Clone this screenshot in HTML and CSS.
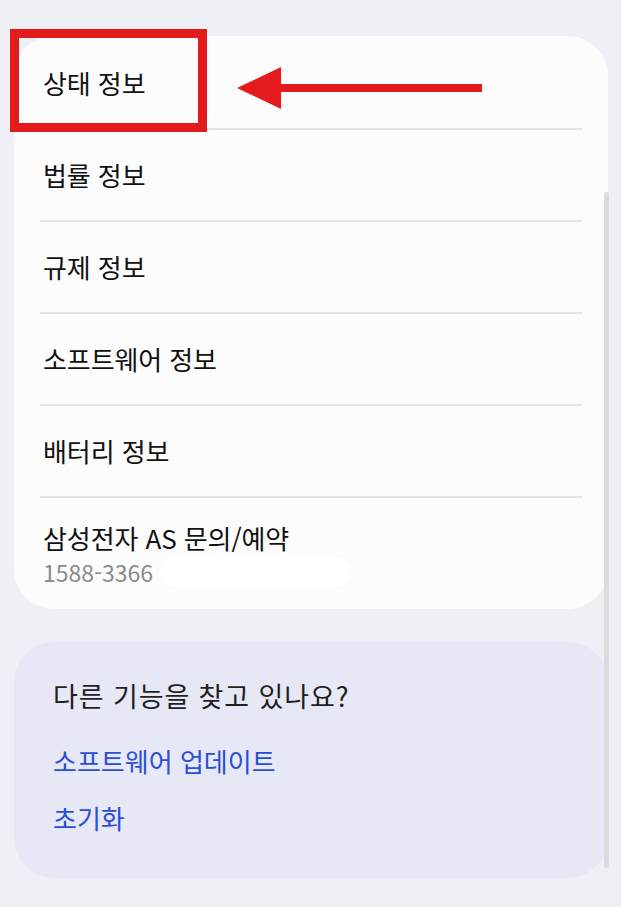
FILE: index.html
```html
<!DOCTYPE html>
<html lang="ko">
<head>
<meta charset="utf-8">
<link rel="stylesheet" href="styles.css">
</head>
<body>
<div class="page">
  <div class="card list">
    <div class="row first"><span class="title">상태 정보</span></div>
    <div class="row"><span class="title">법률 정보</span></div>
    <div class="row"><span class="title">규제 정보</span></div>
    <div class="row"><span class="title">소프트웨어 정보</span></div>
    <div class="row"><span class="title">배터리 정보</span></div>
    <div class="row last">
      <span class="title">삼성전자 AS 문의/예약</span>
      <span class="sub">1588-3366<span class="blur"></span></span>
    </div>
  </div>
  <div class="card help">
    <div class="help-title">다른 기능을 찾고 있나요?</div>
    <div class="link">소프트웨어 업데이트</div>
    <div class="link">초기화</div>
  </div>
  <div class="scrollbar"></div>
  <div class="highlight"></div>
  <svg class="arrow" width="250" height="46" viewBox="0 0 250 46">
    <polygon points="0,21 44,0 44,42" fill="#e31b1d"/>
    <rect x="43" y="17" width="202" height="8" fill="#e31b1d"/>
  </svg>
</div>
</body>
</html>
```
FILE: styles.css
```css
* { box-sizing: border-box; }
html, body { margin: 0; padding: 0; }
body {
  background: #eff0f6;
  font-family: "Noto Sans CJK KR", "Noto Sans", sans-serif;
  width: 621px;
  height: 907px;
  overflow: hidden;
}
.page {
  position: relative;
  width: 621px;
  height: 907px;
  padding: 36px 13px 0 14px;
}
.card {
  border-radius: 40px;
  width: 594px;
}
.list {
  background: #fcfcfd;
  padding: 0 26px;
}
.row {
  height: 92px;
  border-bottom: 2px solid #e4e4e6;
  display: flex;
  flex-direction: column;
  justify-content: center;
  padding-left: 3px;
}
.row.first { height: 94px; padding-top: 2px; }
.row.last {
  border-bottom: none;
  height: 111px;
  padding-bottom: 21px;
  justify-content: flex-end;
}
.row.last .title { margin-bottom: 1px; }
.title {
  font-size: 26px;
  color: #111111;
  line-height: 34px;
  letter-spacing: -0.1px;
}
.sub {
  font-size: 23px;
  color: #8a8a8a;
  line-height: 32px;
  display: flex;
  align-items: center;
}
.blur {
  display: inline-block;
  width: 192px;
  height: 30px;
  background: #ffffff;
  border-radius: 15px;
  margin-left: 6px;
}
.help {
  margin-top: 33px;
  height: 236px;
  background: #e6e8f5;
  padding: 36px 0 0 39px;
}
.help-title {
  font-size: 27px;
  color: #1f1f1f;
  line-height: 36px;
  letter-spacing: 0.9px;
}
.link {
  font-size: 26px;
  color: #2a4ed6;
  line-height: 34px;
  margin-top: 30px;
}
.link + .link { margin-top: 23px; }
.scrollbar {
  position: absolute;
  left: 604px;
  top: 192px;
  width: 5px;
  height: 676px;
  border-radius: 3px;
  background: #dcdcde;
}
.highlight {
  position: absolute;
  left: 10px;
  top: 29px;
  width: 197px;
  height: 103px;
  border: 9px solid #e31b1d;
}
.arrow {
  position: absolute;
  left: 237px;
  top: 67px;
}
```
